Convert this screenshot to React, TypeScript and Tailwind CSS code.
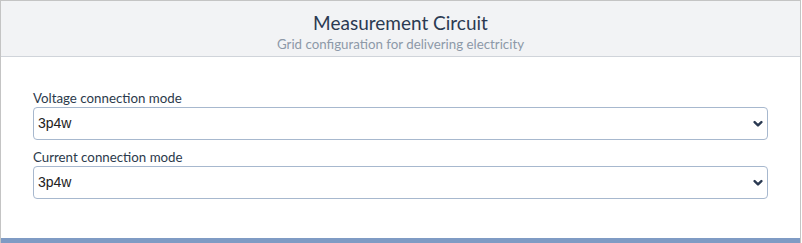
import React from "react";

function Chevron() {
  return (
    <svg width="10" height="7" viewBox="0 0 10 7" className="absolute right-[5px] top-1/2 -translate-y-1/2 pointer-events-none">
      <path d="M1.6 1.6 L5 4.9 L8.4 1.6" fill="none" stroke="#2b3a52" strokeWidth="2.4" strokeLinecap="round" strokeLinejoin="round" />
    </svg>
  );
}

function Field({ label }: { label: string }) {
  return (
    <div className="flex flex-col">
      <label className="text-[13.3px] leading-[18px] text-[#2c3a4b] font-['Lato','Noto_Sans',sans-serif]">{label}</label>
      <div className="relative">
        <select
          className="appearance-none w-full h-[33px] border border-[#a7b8ce] rounded-[4px] bg-white pl-[4px] text-[14px] text-[#222] font-['Liberation_Sans',Arial,sans-serif] outline-none"
          defaultValue="3p4w"
        >
          <option value="3p4w">3p4w</option>
        </select>
        <Chevron />
      </div>
    </div>
  );
}

export default function App() {
  return (
    <div className="w-[802px] h-[243px] bg-white">
      <div className="w-[801px] border-l border-r border-t border-[#c4c4c4] flex flex-col">
        <div className="h-[56px] bg-[#f2f3f5] border-b border-[#d0d4da] flex flex-col items-center pt-[10px] font-['Lato','Noto_Sans',sans-serif]">
          <div className="text-[19px] leading-[24px] text-[#2b3a52]">Measurement Circuit</div>
          <div className="text-[13.3px] leading-[16px] text-[#8d99a8] mt-[1px]">Grid configuration for delivering electricity</div>
        </div>
        <div className="px-[32px] pt-[32px] pb-[39px] flex flex-col gap-[8px] bg-white">
          <Field label="Voltage connection mode" />
          <Field label="Current connection mode" />
        </div>
        <div className="h-[7px] bg-[#7f9bc4]" />
      </div>
    </div>
  );
}
